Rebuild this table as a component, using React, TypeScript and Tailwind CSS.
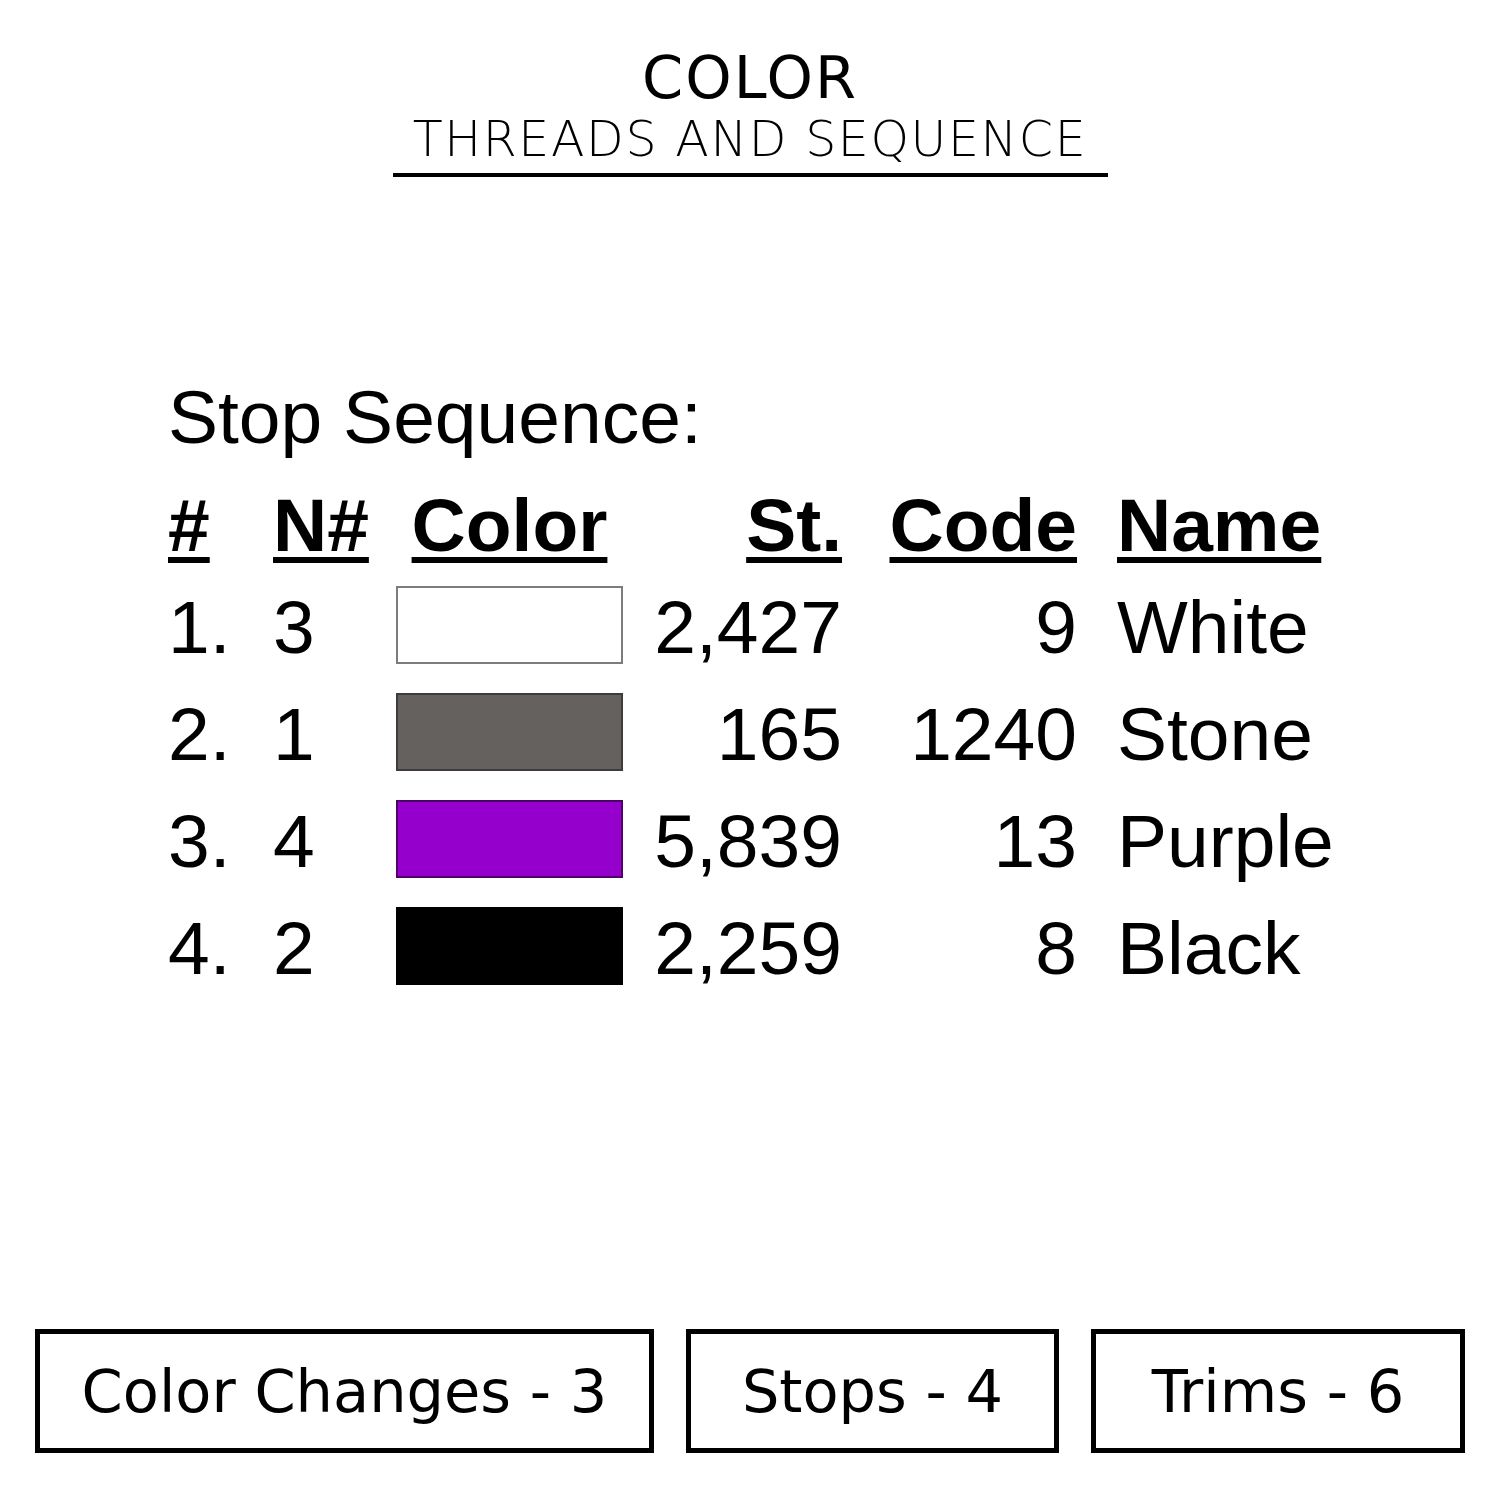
const rows = [
  { n: "1.", needle: "3", swatch: "bg-white border-[#7c7c7c]", st: "2,427", code: "9", name: "White" },
  { n: "2.", needle: "1", swatch: "bg-[#65615f] border-[#3f3b3a]", st: "165", code: "1240", name: "Stone" },
  { n: "3.", needle: "4", swatch: "bg-[#9600cc] border-[#4e0068]", st: "5,839", code: "13", name: "Purple" },
  { n: "4.", needle: "2", swatch: "bg-black border-black", st: "2,259", code: "8", name: "Black" },
];

const heading = "underline decoration-[6px] underline-offset-[6px]";

export default function App() {
  return (
    <div className="w-[1500px] h-[1500px] bg-white text-black flex flex-col">
      {/* TITLE */}
      <header className="pt-[48px] flex flex-col items-center font-['DejaVu_Sans',sans-serif]">
        <h1 className="text-[59px] leading-[59px] tracking-[2px]">COLOR</h1>
        <div className="w-[715px] mt-[8px] pb-[9px] border-b-[4px] border-black text-center">
          <p className="text-[49px] leading-[49px] font-extralight tracking-[1.6px]">THREADS AND SEQUENCE</p>
        </div>
      </header>

      {/* STOP SEQUENCE */}
      <section className="pl-[168px] mt-[203px] font-['Liberation_Sans',Arial,sans-serif] text-[75px]">
        <p className="leading-[75px]">Stop Sequence:</p>

        <div className="mt-[21px] grid grid-cols-[105px_123px_227px_219px_235px_1fr] font-bold leading-[98px] h-[98px]">
          <div><span className={heading}>#</span></div>
          <div><span className={heading}>N#</span></div>
          <div className="text-center"><span className={heading}>Color</span></div>
          <div className="text-right"><span className={heading}>St.</span></div>
          <div className="text-right"><span className={heading}>Code</span></div>
          <div className="pl-[40px]"><span className={heading}>Name</span></div>
        </div>

        {rows.map((r) => (
          <div key={r.n} className="grid grid-cols-[105px_123px_227px_219px_235px_1fr] leading-[107px] h-[107px]">
            <div>{r.n}</div>
            <div>{r.needle}</div>
            <div className="pt-[12px]">
              <div className={`h-[78px] w-[227px] border-[2px] ${r.swatch}`} />
            </div>
            <div className="text-right">{r.st}</div>
            <div className="text-right">{r.code}</div>
            <div className="pl-[40px]">{r.name}</div>
          </div>
        ))}
      </section>

      {/* TOTALS */}
      <footer className="mt-auto pb-[47px] pl-[35px] flex gap-[32px] font-['DejaVu_Sans',sans-serif] text-[59px] leading-[59px]">
        <div className="w-[619px] h-[124px] border-[5px] border-black flex items-center justify-center">Color Changes - 3</div>
        <div className="w-[373px] h-[124px] border-[5px] border-black flex items-center justify-center">Stops - 4</div>
        <div className="w-[374px] h-[124px] border-[5px] border-black flex items-center justify-center">Trims - 6</div>
      </footer>
    </div>
  );
}
